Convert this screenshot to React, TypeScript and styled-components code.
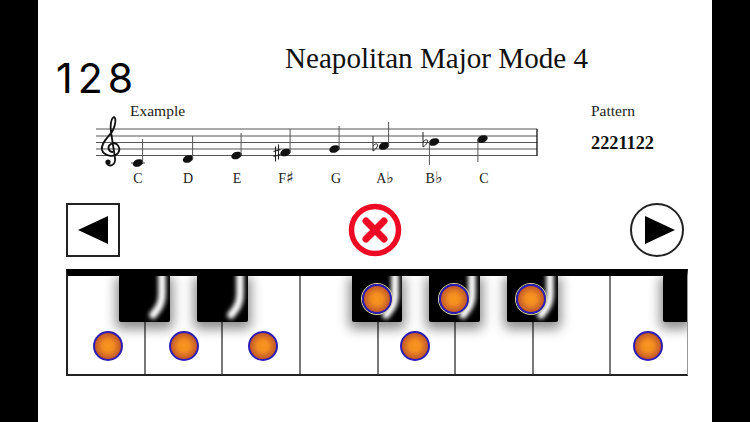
import React from 'react';
import styled, { createGlobalStyle } from 'styled-components';

const GlobalStyle = createGlobalStyle`
  html, body {
    margin: 0;
    padding: 0;
    background: #000;
  }
`;

const Page = styled.div`
  width: 674px;
  height: 422px;
  margin: 0 auto;
  background: #fff;
  overflow: hidden;
  display: flex;
  flex-direction: column;
  font-family: "Liberation Serif", serif;
  color: #111;
`;

const Header = styled.div`
  height: 97px;
  padding-left: 18px;
  display: flex;
  align-items: flex-start;
`;

const Tempo = styled.div`
  width: 229px;
  margin-top: 55px;
  font-family: Inter, sans-serif;
  font-size: 41px;
  line-height: 46px;
  font-weight: 400;
  letter-spacing: 5px;
  color: #000;
`;

const Title = styled.h1`
  margin: 41px 0 0;
  font-size: 29.1px;
  line-height: 34px;
  font-weight: 400;
  white-space: nowrap;
`;

const ScoreRow = styled.div`
  height: 106px;
  display: flex;
  align-items: flex-start;
`;

const Score = styled.div`
  width: 553px;
  flex: none;
  padding-left: 92px;
  box-sizing: border-box;
`;

const Caption = styled.div`
  font-size: 15.5px;
  line-height: 16px;
  margin-top: 6px;
  color: #222;
`;

const Staff = styled.svg`
  display: block;
  margin: -19px 0 0 -35px;
`;

const NoteNames = styled.div`
  display: flex;
  margin: -1px 0 0 -17px;
`;

const NoteName = styled.span<{ $w: number }>`
  width: ${p => p.$w}px;
  flex: none;
  text-align: center;
  font-size: 14px;
  line-height: 16px;
  color: #222;
`;

const Accidental = styled.span`
  font-family: "DejaVu Sans", sans-serif;
  font-size: 16px;
  line-height: 14px;
`;

const PatternBlock = styled.div`
  display: flex;
  flex-direction: column;
`;

const PatternValue = styled.div`
  margin-top: 14px;
  font-size: 18.3px;
  line-height: 20px;
  font-weight: 700;
`;

const Controls = styled.div`
  height: 66px;
  padding: 0 28px;
  display: flex;
  align-items: flex-start;
  justify-content: space-between;
`;

const SquareButton = styled.div`
  width: 54px;
  height: 54px;
  box-sizing: border-box;
  border: 2px solid #222;
  display: flex;
  align-items: center;
  justify-content: center;
`;

const RoundButton = styled(SquareButton)`
  border-radius: 50%;
`;

const ArrowRight = styled.svg`
  margin-left: 5px;
`;

const Keyboard = styled.div`
  position: relative;
  margin-left: 28px;
  width: 622px;
  height: 107px;
  box-sizing: border-box;
  border: 2px solid #222;
  border-top: 7px solid #000;
  border-right: 1px solid #999;
  display: flex;
  background: #fff;
  overflow: hidden;
`;

const WhiteKey = styled.div`
  flex: 1;
  border-left: 2px solid #777;
  display: flex;
  align-items: flex-end;
  justify-content: center;
  padding-bottom: 13px;

  &:first-child {
    border-left: 0;
  }
`;

const BlackKey = styled.div<{ $left: number; $w: number }>`
  position: absolute;
  top: 0;
  left: ${p => p.$left}px;
  width: ${p => p.$w}px;
  height: 46px;
  background: #000;
  border-radius: 0 0 2px 2px;
  box-shadow: 0 4px 12px 3px rgba(0, 0, 0, 0.45);
  display: flex;
  align-items: center;
  justify-content: center;
`;

const Glare = styled.svg`
  position: absolute;
  top: 0;
  left: 0;
`;

const Dot = styled.div<{ $nudge: number; $ring?: boolean }>`
  position: relative;
  width: 30px;
  height: 30px;
  box-sizing: border-box;
  border-radius: 50%;
  border: 2px solid #2d1db5;
  background: radial-gradient(circle, #f9971e 0%, #f28c20 30%, #bf562a 72%, #86303c 100%);
  transform: translateX(${p => p.$nudge}px);
  box-shadow: ${p => (p.$ring ? '0 0 0 1px #d8d8a8' : 'none')};
`;

const blackKeys = [
  { left: 51, w: 51 },
  { left: 129, w: 51 },
  { left: 284, w: 50, nudge: 0 },
  { left: 361, w: 51, nudge: -1 },
  { left: 439, w: 51, nudge: -2 },
  { left: 595, w: 25, plain: true },
];

const noteNames: { name: string; acc?: string; w: number }[] = [
  { name: 'C', w: 50 },
  { name: 'D', w: 50 },
  { name: 'E', w: 48 },
  { name: 'F', acc: '♯', w: 50 },
  { name: 'G', w: 50 },
  { name: 'A', acc: '♭', w: 48 },
  { name: 'B', acc: '♭', w: 50 },
  { name: 'C', w: 50 },
];

// note head centre and stem tip, in staff coordinates
const notes = [
  { x: 43, y: 63, stem: 39, up: true },
  { x: 93, y: 59, stem: 36, up: true },
  { x: 141.5, y: 55.5, stem: 33, up: true },
  { x: 190.5, y: 52.5, stem: 29, up: true, sharp: true },
  { x: 239.5, y: 49, stem: 26, up: true },
  { x: 289, y: 46, stem: 22, up: true, flat: true },
  { x: 339, y: 42, stem: 65, up: false, flat: true },
  { x: 387.5, y: 39, stem: 62, up: false },
];

const StaffDrawing = () => (
  <Staff width="445" height="72" viewBox="0 0 445 72">
    {[29, 36, 42.5, 49, 55.5].map(y => (
      <line key={y} x1="1" x2="442" y1={y} y2={y} stroke="#555" strokeWidth="1" />
    ))}
    <line x1="442" x2="442" y1="29" y2="56" stroke="#222" strokeWidth="1.4" />
    <path
      d="M18 52 C13 52 12 46 16 44 C23 41 26 49 23 53 C19 58 9 56 7 50 C5 43 15 36 18 30 C21 24 21 18 19 17 C16 18 15 26 16 32 L20 58 C21 65 15 67 12 64"
      fill="none"
      stroke="#111"
      strokeWidth="1.8"
    />
    <circle cx="13" cy="62" r="2.6" fill="#111" />
    <line x1="36" x2="50" y1="63" y2="63" stroke="#555" strokeWidth="1" />
    {notes.map(n => {
      const stemX = n.up ? n.x + 4.6 : n.x - 4.6;
      return (
        <g key={n.x}>
          <ellipse cx={n.x} cy={n.y} rx="5.4" ry="3.6" fill="#111" transform={`rotate(-20 ${n.x} ${n.y})`} />
          <line x1={stemX} x2={stemX} y1={n.y} y2={n.stem} stroke="#555" strokeWidth="1" />
          {n.flat && (
            <path
              d={`M${n.x - 11} ${n.y - 10} V${n.y + 5} C${n.x - 6} ${n.y + 2} ${n.x - 5} ${n.y - 3} ${n.x - 8} ${n.y - 2} C${n.x - 9} ${n.y - 2} ${n.x - 10} ${n.y - 1} ${n.x - 11} ${n.y}`}
              fill="none"
              stroke="#222"
              strokeWidth="1"
            />
          )}
          {n.sharp && (
            <path
              d={`M${n.x - 10} ${n.y - 6} V${n.y + 9} M${n.x - 7} ${n.y - 8} V${n.y + 7} M${n.x - 12} ${n.y - 1} L${n.x - 5} ${n.y - 3} M${n.x - 12} ${n.y + 4} L${n.x - 5} ${n.y + 2}`}
              fill="none"
              stroke="#222"
              strokeWidth="1.1"
            />
          )}
        </g>
      );
    })}
  </Staff>
);

const KeyGlare = ({ id }: { id: string }) => (
  <Glare width="51" height="46" viewBox="0 0 51 46">
    <defs>
      <filter id={id} x="-80%" y="-20%" width="260%" height="140%">
        <feGaussianBlur stdDeviation="2.3" />
      </filter>
    </defs>
    <path
      d="M43 -6 V18 C43 28 39 33 34 39"
      fill="none"
      stroke="#fff"
      strokeWidth="7.5"
      strokeLinecap="round"
      filter={`url(#${id})`}
    />
  </Glare>
);

export default function App() {
  return (
    <Page>
      <GlobalStyle />
      <Header>
        <Tempo>128</Tempo>
        <Title>Neapolitan Major Mode 4</Title>
      </Header>
      <ScoreRow>
        <Score>
          <Caption>Example</Caption>
          <StaffDrawing />
          <NoteNames>
            {noteNames.map((n, i) => (
              <NoteName key={i} $w={n.w}>
                {n.name}
                {n.acc && <Accidental>{n.acc}</Accidental>}
              </NoteName>
            ))}
          </NoteNames>
        </Score>
        <PatternBlock>
          <Caption>Pattern</Caption>
          <PatternValue>2221122</PatternValue>
        </PatternBlock>
      </ScoreRow>
      <Controls>
        <SquareButton>
          <svg width="32" height="28" viewBox="0 0 32 28">
            <path d="M1 14 L31 0 V28 Z" fill="#000" />
          </svg>
        </SquareButton>
        <svg width="54" height="54" viewBox="0 0 54 54">
          <circle cx="27" cy="27" r="23.5" fill="#fff" stroke="#ee0a24" strokeWidth="5.5" />
          <path d="M18 18 L36 36 M36 18 L18 36" stroke="#ee0a24" strokeWidth="7" strokeLinecap="round" />
        </svg>
        <RoundButton>
          <ArrowRight width="32" height="28" viewBox="0 0 32 28">
            <path d="M31 14 L1 0 V28 Z" fill="#000" />
          </ArrowRight>
        </RoundButton>
      </Controls>
      <Keyboard>
        <WhiteKey><Dot $nudge={2} /></WhiteKey>
        <WhiteKey><Dot $nudge={1} /></WhiteKey>
        <WhiteKey><Dot $nudge={2} /></WhiteKey>
        <WhiteKey />
        <WhiteKey><Dot $nudge={-1} /></WhiteKey>
        <WhiteKey />
        <WhiteKey />
        <WhiteKey><Dot $nudge={-1} /></WhiteKey>
        {blackKeys.map((k, i) => (
          <BlackKey key={k.left} $left={k.left} $w={k.w}>
            {!k.plain && <KeyGlare id={`glare${i}`} />}
            {k.nudge !== undefined && <Dot $nudge={k.nudge} $ring />}
          </BlackKey>
        ))}
      </Keyboard>
    </Page>
  );
}
